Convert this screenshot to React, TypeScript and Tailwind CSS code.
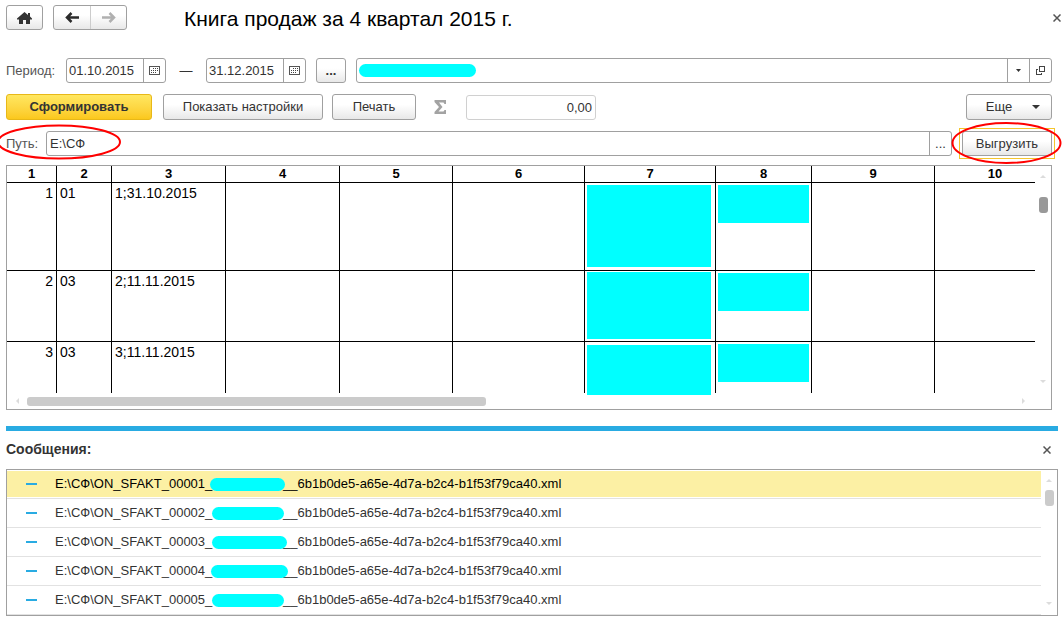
import { useState } from 'react';
import clsx from 'clsx';

interface SalesRow {
  num: number;
  code: string;
  invoice: string;
  height: string;
  buyer: string;
}

interface ExportMessage {
  num: string;
  mask: string;
}

const columns = [
  'w-[50px]',
  'w-[55px]',
  'w-[114px]',
  'w-[114px]',
  'w-[113px]',
  'w-[132px]',
  'w-[131px]',
  'w-[96px]',
  'w-[123px]',
  '',
];

const rows: SalesRow[] = [
  { num: 1, code: '01', invoice: '1;31.10.2015', height: 'h-[88px]', buyer: 'mt-0.5 h-[82px]' },
  { num: 2, code: '03', invoice: '2;11.11.2015', height: 'h-[71px]', buyer: 'mt-px h-[67px]' },
  { num: 3, code: '03', invoice: '3;11.11.2015', height: 'h-[51px]', buyer: 'mt-[3px] -mb-1 h-[50px]' },
];

const messages: ExportMessage[] = [
  { num: '00001', mask: 'w-[75px] -ml-1' },
  { num: '00002', mask: 'w-[72px] -ml-0.5' },
  { num: '00003', mask: 'w-[75px] -ml-0.5' },
  { num: '00004', mask: 'w-[77px] -ml-[3px]' },
  { num: '00005', mask: 'w-[72px] -ml-0.5' },
];

const buttonBase =
  'flex items-center justify-center border border-[#a0a0a0] rounded-[3px] bg-linear-to-b from-white from-40% to-[#e8e8e8] text-[#333]';

function CalendarIcon() {
  return (
    <svg width="11" height="9" viewBox="0 0 11 9" shapeRendering="crispEdges" aria-hidden="true">
      <path d="M0.5 0.5h10v8h-10z" fill="none" stroke="#555" />
      <path d="M4 2.500h1M6 2.500h1M8 2.500h1M2 4.500h1M4 4.500h1M6 4.500h1M8 4.500h1M2 6.500h1M4 6.500h1M6 6.500h1" stroke="#444" />
    </svg>
  );
}

function CloseIcon() {
  return (
    <svg width="8" height="8" viewBox="0 0 8 8" aria-hidden="true">
      <path d="M0.500 0.500l7 7M7.500 0.500l-7 7" stroke="#555" strokeWidth="1.500" />
    </svg>
  );
}

function Arrow({ d }: { d: string }) {
  return (
    <svg width="6" height="6" viewBox="0 0 6 6" aria-hidden="true">
      <path d={d} fill="#dcdcdc" />
    </svg>
  );
}

function DateField({ label, initial }: { label: string; initial: string }) {
  const [value, setValue] = useState(initial);
  return (
    <div className="flex h-[25px] w-[100px] shrink-0 rounded-[3px] border border-[#a0a0a0]">
      <input
        aria-label={label}
        value={value}
        onChange={(e) => setValue(e.target.value)}
        className="w-0 grow pl-0.5 outline-none"
      />
      <button aria-label="Календарь" className="flex w-[22px] items-center justify-center border-l border-[#a0a0a0]">
        <CalendarIcon />
      </button>
    </div>
  );
}

export default function App() {
  const [path, setPath] = useState('E:\\СФ');
  const [total, setTotal] = useState('0,00');
  const [selected, setSelected] = useState(0);

  return (
    <div className="overflow-hidden bg-white pt-[5px] pb-1.5 pl-1.5 font-['Liberation_Sans',Arial,sans-serif] text-[13px] text-[#333]">
      {/* Заголовок */}
      <header className="flex h-[25px] items-center pr-[3px]">
        <button aria-label="Начальная страница" className={clsx(buttonBase, 'h-[25px] w-[37px]')}>
          <svg width="15" height="12" viewBox="0 0 15 12" aria-hidden="true">
            <path d="M7.500 0L0 6.500V7.500h2V12h4V8h3v4h4V7.500h2V6.500L13 4.500V1h-2v2z" fill="#333" />
          </svg>
        </button>
        <div className={clsx(buttonBase, 'ml-2.5 h-[25px] w-[74px]')}>
          <button aria-label="Назад" className="flex h-full w-[37px] items-center justify-center border-r border-[#ccc]">
            <svg width="14" height="11" viewBox="0 0 14 11" fill="none" stroke="#2b2b2b" strokeWidth="2.500" aria-hidden="true">
              <path d="M14 5.500H2M6.500 1L2 5.500L6.500 10" />
            </svg>
          </button>
          <button aria-label="Вперед" className="flex h-full grow items-center justify-center">
            <svg width="14" height="11" viewBox="0 0 14 11" fill="none" stroke="#b0b0b0" strokeWidth="2.500" aria-hidden="true">
              <path d="M0 5.500H12M7.500 1L12 5.500L7.500 10" />
            </svg>
          </button>
        </div>
        <h1 className="ml-[57px] grow pt-0.5 text-[21px] leading-6 text-black">Книга продаж за 4 квартал 2015 г.</h1>
        <button aria-label="Закрыть">
          <CloseIcon />
        </button>
      </header>

      <main className="pr-3">
        {/* Период и организация */}
        <div className="mt-7 flex items-center">
          <span className="w-15 shrink-0 text-[#555]">Период:</span>
          <DateField label="Начало периода" initial="01.10.2015" />
          <span className="w-10 shrink-0 text-center">—</span>
          <DateField label="Конец периода" initial="31.12.2015" />
          <button className={clsx(buttonBase, 'ml-2.5 h-[25px] w-[30px] shrink-0 font-bold')}>...</button>
          <div className="relative ml-2.5 flex h-[25px] grow rounded-[3px] border border-[#a0a0a0]">
            <input aria-label="Организация" className="w-0 grow px-1 outline-none" />
            <div className="absolute top-[5px] left-0.5 h-[13px] w-[117px] rounded-full bg-[#00ffff]" />
            <button aria-label="Выбрать из списка" className="flex w-[22px] items-center justify-center border-l border-[#a0a0a0]">
              <svg width="5" height="3" viewBox="0 0 5 3" aria-hidden="true">
                <path d="M0 0h5L2.500 3z" fill="#333" />
              </svg>
            </button>
            <button aria-label="Открыть" className="flex w-[22px] items-center justify-center border-l border-[#a0a0a0]">
              <svg width="9" height="9" viewBox="0 0 9 9" fill="none" stroke="#444" shapeRendering="crispEdges" aria-hidden="true">
                <path d="M3.500 0.500h5v5h-5zM2 3.500h-1.500v5h5V7" />
              </svg>
            </button>
          </div>
        </div>

        {/* Команды отчета */}
        <div className="mt-[11px] flex items-center">
          <button className="h-[26px] w-[146px] shrink-0 rounded-[3px] border border-[#e8b818] bg-linear-to-b from-[#ffe75f] to-[#fbc81b] font-bold">
            Сформировать
          </button>
          <button className={clsx(buttonBase, 'ml-[11px] h-[26px] w-40 shrink-0')}>Показать настройки</button>
          <button className={clsx(buttonBase, 'ml-[9px] h-[26px] w-[84px] shrink-0')}>Печать</button>
          <svg className="ml-[18px] shrink-0" width="13" height="14" viewBox="0 0 13 14" aria-hidden="true">
            <path d="M0.500 0H12v4h-1.500L9.500 2.500H5L8.500 7l-4 4.500h5L10.500 10H12v4H0.500v-2L5 7 0.500 2z" fill="#a3a3a3" />
          </svg>
          <input
            aria-label="Сумма"
            value={total}
            onChange={(e) => setTotal(e.target.value)}
            className="ml-[19px] h-[25px] w-[130px] rounded-[3px] border border-[#d0d0d0] px-[3px] text-right outline-none"
          />
          <button className={clsx(buttonBase, 'ml-auto h-[26px] w-[86px] gap-5 pl-2')}>
            Еще
            <svg width="8" height="4" viewBox="0 0 8 4" aria-hidden="true">
              <path d="M0 0h8L4 4z" fill="#333" />
            </svg>
          </button>
        </div>

        {/* Путь выгрузки */}
        <div className="relative mt-[11px] flex items-center">
          <label htmlFor="path" className="w-10 shrink-0 text-[#555]">
            Путь:
          </label>
          <div className="flex h-[25px] grow rounded-[3px] border border-[#a0a0a0]">
            <input
              id="path"
              value={path}
              onChange={(e) => setPath(e.target.value)}
              className="w-0 grow pl-[3px] outline-none"
            />
            <button aria-label="Выбрать каталог" className="w-[22px] border-l border-[#a0a0a0] text-center">
              ...
            </button>
          </div>
          <div className="relative ml-2.5">
            <div className="-m-[3px] border border-[#f5c52c] p-0.5">
              <button className={clsx(buttonBase, 'h-[25px] w-[90px]')}>Выгрузить</button>
            </div>
            <svg className="pointer-events-none absolute -top-[9px] -left-[11px]" width="111" height="42" viewBox="0 0 111 42" aria-hidden="true">
              <ellipse cx="55.500" cy="21" rx="54" ry="20" fill="none" stroke="#f00" strokeWidth="2" />
            </svg>
          </div>
          <svg className="pointer-events-none absolute -top-[7px] -left-[9px]" width="126" height="36" viewBox="0 0 126 36" aria-hidden="true">
            <ellipse cx="62" cy="18" rx="61" ry="16.500" fill="none" stroke="#f00" strokeWidth="2" />
          </svg>
        </div>

        {/* Табличный документ */}
        <div className="mt-[9px] flex border border-[#a0a0a0]">
          <div className="min-w-0 grow">
            <table className="w-full table-fixed border-separate border-spacing-0 text-sm leading-4 text-black">
              <colgroup>
                {columns.map((width, i) => (
                  <col key={i} className={width} />
                ))}
              </colgroup>
              <thead>
                <tr className="text-[13px]">
                  {columns.map((_, i) => (
                    <th key={i} className="h-[17px] border-r border-b border-black p-0 last:border-r-0 last:pl-5">
                      {i + 1}
                    </th>
                  ))}
                </tr>
              </thead>
              <tbody className="[&_td]:border-r [&_td]:border-b [&_td]:border-black [&_td]:p-0 [&_td]:align-top [&_td:last-child]:border-r-0 [&_tr:last-child_td]:border-b-0">
                {rows.map((row) => (
                  <tr key={row.num} className={row.height}>
                    <td className="text-right">
                      <div className="pt-0.5 pr-[3px]">{row.num}</div>
                    </td>
                    <td>
                      <div className="pt-0.5 pl-[3px]">{row.code}</div>
                    </td>
                    <td>
                      <div className="pt-0.5 pl-[3px]">{row.invoice}</div>
                    </td>
                    <td />
                    <td />
                    <td />
                    <td>
                      <div className={clsx('relative ml-0.5 w-[124px] bg-[#00ffff]', row.buyer)} />
                    </td>
                    <td>
                      <div className="mt-0.5 ml-0.5 h-[38px] w-[91px] bg-[#00ffff]" />
                    </td>
                    <td />
                    <td />
                  </tr>
                ))}
              </tbody>
            </table>
            <div className="flex h-4 items-center px-2">
              <Arrow d="M4 0l-3 3 3 3z" />
              <div className="ml-1.5 h-[9px] w-[459px] rounded-[3px] bg-[#cbcbcb]" />
              <div className="ml-auto">
                <Arrow d="M1 0l3 3-3 3z" />
              </div>
            </div>
          </div>
          <div className="flex w-4 shrink-0 flex-col items-center justify-between pt-2 pb-6">
            <div className="flex flex-col items-center gap-[17px]">
              <Arrow d="M0 4l3-3 3 3z" />
              <div className="h-4 w-[9px] rounded-[3px] bg-[#999]" />
            </div>
            <Arrow d="M0 1l3 3 3-3z" />
          </div>
        </div>
      </main>

      {/* Сообщения */}
      <section className="mt-4 mr-1.5 border-t-[5px] border-[#29abe2]">
        <div className="flex h-[38px] items-center justify-between pr-[7px] pb-0.5">
          <h2 className="text-sm font-bold">Сообщения:</h2>
          <button aria-label="Закрыть сообщения" className="pt-0.5">
            <CloseIcon />
          </button>
        </div>
        <div className="flex border border-[#a0a0a0]">
          <ul className="min-w-0 grow">
            {messages.map((message, i) => (
              <li key={message.num} className="h-[29px] border-b border-[#e2e2e2] py-px">
                <button
                  onClick={() => setSelected(i)}
                  className={clsx(
                    'flex h-[26px] w-full items-center pl-[19px] text-left whitespace-nowrap',
                    selected === i && 'bg-[#fcf0a4] text-black',
                  )}
                >
                  <span className="mr-[18px] h-0.5 w-[11px] bg-[#29abe2]" />
                  <span className="w-[159px]">E:\СФ\ON_SFAKT_{message.num}_</span>
                  <span className="w-[69px]">
                    <span className={clsx('relative block h-[13px] rounded-full bg-[#00ffff]', message.mask)} />
                  </span>
                  <span>__6b1b0de5-a65e-4d7a-b2c4-b1f53f79ca40.xml</span>
                </button>
              </li>
            ))}
          </ul>
          <div className="flex w-4 shrink-0 flex-col items-center justify-between py-2">
            <div className="flex flex-col items-center gap-1.5">
              <Arrow d="M0 4l3-3 3 3z" />
              <div className="h-4 w-[9px] rounded-[3px] bg-[#cbcbcb]" />
            </div>
            <Arrow d="M0 1l3 3 3-3z" />
          </div>
        </div>
      </section>
    </div>
  );
}
